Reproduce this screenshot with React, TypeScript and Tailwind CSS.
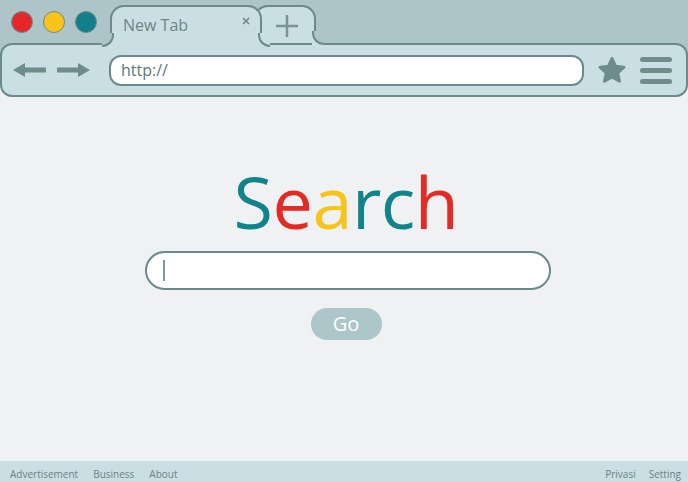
import React from 'react';

const LINE = 'border-[#6b8a8b]';

const Foot: React.FC<{ side: 'left' | 'right'; fill: string; outside: string }> = ({ side, fill, outside }) => (
    <div
        className={`absolute bottom-[-2px] w-[12px] h-[14px] ${side === 'left' ? 'left-[-10px]' : 'right-[-10px]'} ${fill}`}
    >
        <div
            className={`w-full h-full border-b-2 ${LINE} ${outside} ${
                side === 'left' ? 'border-r-2 rounded-br-[12px]' : 'border-l-2 rounded-bl-[12px]'
            }`}
        />
    </div>
);

const Arrow: React.FC<{ flip?: boolean }> = ({ flip }) => (
    <svg width="33" height="14" viewBox="0 0 33 14" className={flip ? 'scale-x-[-1]' : ''}>
        <polygon points="0,7 12,0 12,14" fill="#6f8c8b" />
        <rect x="11" y="4.5" width="22" height="5" fill="#6f8c8b" />
    </svg>
);

const App: React.FC = () => {
    return (
        <div className="w-[688px] h-[482px] flex flex-col bg-[#f0f1f3] font-['Open_Sans',sans-serif] overflow-hidden">
            {/* tabs strip */}
            <div className="relative z-10 h-[43px] flex bg-[#adc5c8]">
                <div className="flex items-center gap-[10px] pl-[11px] self-center">
                    <span className="w-[22px] h-[22px] rounded-full bg-[#e4282a] border-[1.5px] border-[#6b8a8b]" />
                    <span className="w-[22px] h-[22px] rounded-full bg-[#f8c41a] border-[1.5px] border-[#6b8a8b]" />
                    <span className="w-[22px] h-[22px] rounded-full bg-[#11808a] border-[1.5px] border-[#6b8a8b]" />
                </div>
                <div className="ml-[13px] self-end flex items-end">
                    <div className={`relative z-10 w-[152px] h-[40px] mb-[-2px] border-2 border-b-0 ${LINE} rounded-t-[14px] bg-[#c9dfe3] flex justify-between pl-[11px] pr-[10px]`}>
                        <Foot side="left" fill="bg-[#c9dfe3]" outside="bg-[#adc5c8]" />
                        <Foot side="right" fill="bg-[#c9dfe3]" outside="bg-[#c9dfe3]" />
                        <span className="pt-[8px] text-[16px] leading-[20px] text-[#6e8585]">New Tab</span>
                        <svg width="8" height="8" viewBox="0 0 8 8" className="mt-[10px]">
                            <path d="M1 1 L7 7 M7 1 L1 7" stroke="#6e8585" strokeWidth="1.5" />
                        </svg>
                    </div>
                    <div className={`relative w-[62px] h-[38px] ml-[-8px] border-2 border-b-0 ${LINE} rounded-t-[14px] bg-[#c9dfe3] flex items-center justify-end pr-[16px]`}>
                        <Foot side="right" fill="bg-[#c9dfe3]" outside="bg-[#adc5c8]" />
                        <svg width="22" height="22" viewBox="0 0 22 22" className="mt-[1px]">
                            <path d="M11 0 V22 M0 11 H22" stroke="#7a9494" strokeWidth="2.5" />
                        </svg>
                    </div>
                </div>
            </div>

            {/* toolbar */}
            <div className="bg-[linear-gradient(#adc5c8_50%,#f0f1f3_50%)]">
                <div className={`h-[54px] border-2 ${LINE} rounded-[12px] bg-[#c9dfe3] flex items-center pl-[11px] pr-[12px]`}>
                    <Arrow />
                    <div className="ml-[11px]">
                        <Arrow flip />
                    </div>
                    <div className={`ml-[19px] w-[475px] h-[31px] border-2 ${LINE} rounded-[12px] bg-white flex items-center pl-[10px]`}>
                        <span className="text-[16px] text-[#5e7777]">http://</span>
                    </div>
                    <svg width="30" height="28" viewBox="0 0 30 28" className="ml-[13px]">
                        <path
                            d="M15 2.5 L18.6 10.3 L27 11.2 L20.7 16.9 L22.5 25.2 L15 21 L7.5 25.2 L9.3 16.9 L3 11.2 L11.4 10.3 Z"
                            fill="#6f8c8b"
                            stroke="#6f8c8b"
                            strokeWidth="3"
                            strokeLinejoin="round"
                        />
                    </svg>
                    <div className="ml-[13px] flex flex-col gap-[6px]">
                        <span className="block w-[32px] h-[5px] rounded-full bg-[#6f8c8b]" />
                        <span className="block w-[32px] h-[5px] rounded-full bg-[#6f8c8b]" />
                        <span className="block w-[32px] h-[5px] rounded-full bg-[#6f8c8b]" />
                    </div>
                </div>
            </div>

            {/* page */}
            <div className="flex-1 flex flex-col items-center pl-[4px]">
                <h1 className="mt-[68px] text-[72px] leading-[72px] font-normal tracking-[-0.5px]">
                    <span className="text-[#11838a]">S</span>
                    <span className="text-[#e42a24]">e</span>
                    <span className="text-[#f7c41a]">a</span>
                    <span className="text-[#11838a]">r</span>
                    <span className="text-[#11838a]">c</span>
                    <span className="text-[#e42a24]">h</span>
                </h1>
                <div className={`mt-[14px] ml-[4px] w-[406px] h-[39px] border-2 ${LINE} rounded-full bg-white flex items-center pl-[16px]`}>
                    <span className="w-[2px] h-[21px] bg-[#7a9a9a]" />
                </div>
                <button className="mt-[18px] w-[71px] h-[32px] rounded-full bg-[#adc6c9] text-white text-[20px] leading-none">
                    Go
                </button>
            </div>

            {/* footer */}
            <footer className="h-[21px] bg-[#c9dfe3] flex items-start justify-between pt-[6px] pl-[10px] pr-[7px] text-[10px] leading-[14px] text-[#6d8283]">
                <div className="flex gap-[15px]">
                    <span>Advertisement</span>
                    <span>Business</span>
                    <span>About</span>
                </div>
                <div className="flex gap-[13px]">
                    <span>Privasi</span>
                    <span>Setting</span>
                </div>
            </footer>
        </div>
    );
};

export default App;
